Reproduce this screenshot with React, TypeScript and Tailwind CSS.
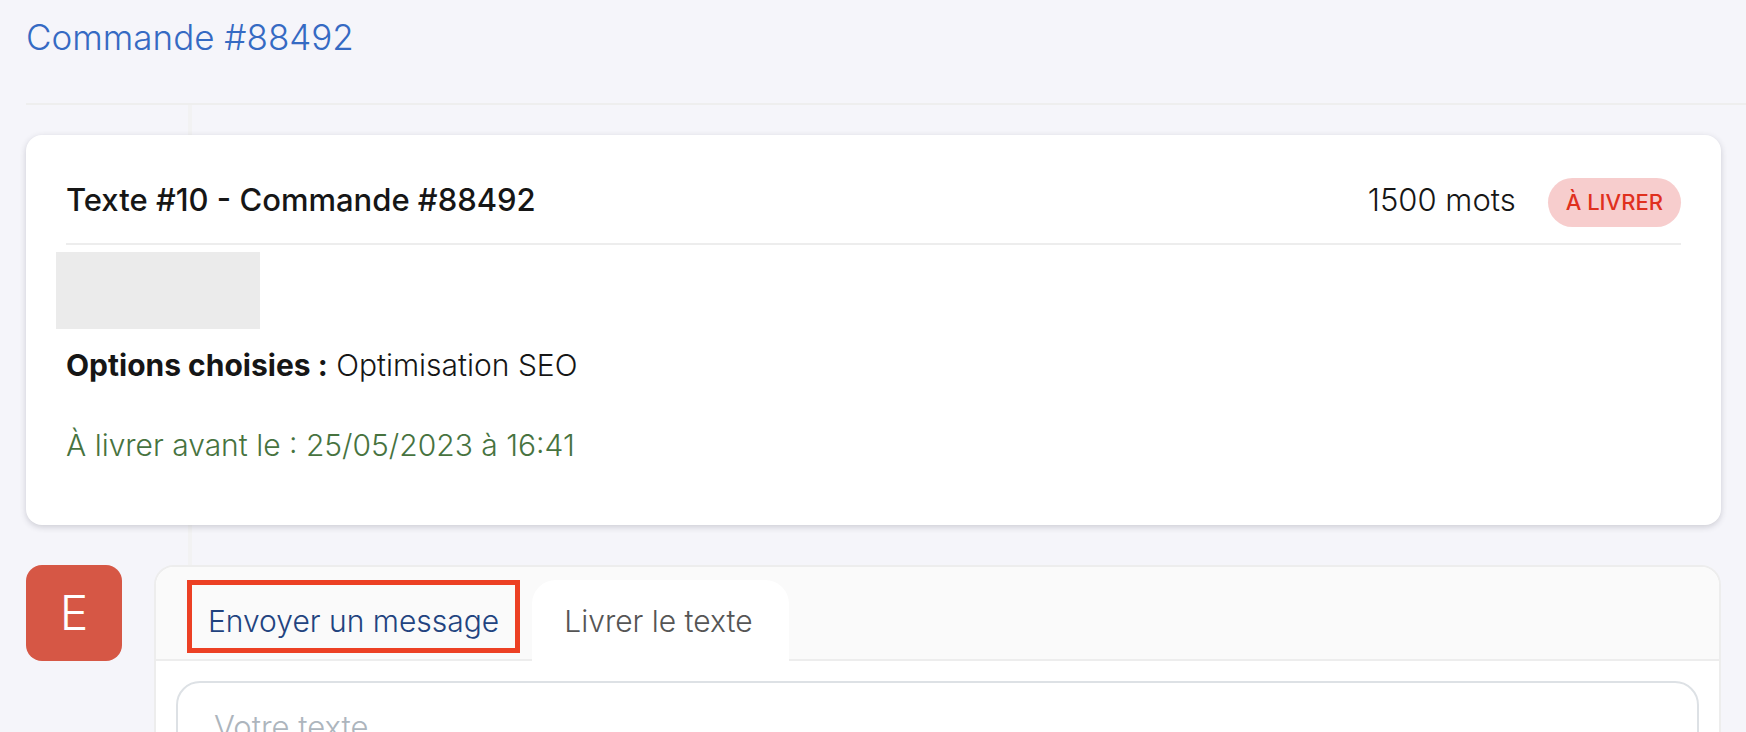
import { useState } from "react";

function OrderCard() {
  return (
    <section className="relative rounded-2xl bg-white px-10 pt-[43px] pb-14 shadow-[0_2px_6px_rgba(40,40,60,0.2)]">
      <header className="flex items-start justify-between border-b-2 border-[#ededed] pb-4">
        <h2 className="text-[31px] leading-11 font-medium">Texte #10 - Commande #88492</h2>
        <div className="flex items-start gap-8">
          <span className="text-[31px] leading-11">1500 mots</span>
          <span className="rounded-full bg-[#f7cdcd] px-[18px] text-[22px] leading-[49px] font-medium text-[#e0301e]">
            À LIVRER
          </span>
        </div>
      </header>
      <div className="-ml-[10px] mt-[7px] h-[77px] w-[204px] bg-[#ebebeb]" />
      <p className="mt-3 text-[30px] leading-12">
        <strong className="font-bold">Options choisies :</strong> Optimisation SEO
      </p>
      <p className="mt-8 text-[30px] leading-12 text-[#47733f]">À livrer avant le : 25/05/2023 à 16:41</p>
    </section>
  );
}

function ReplyPanel() {
  const [tab, setTab] = useState("deliver");
  return (
    <section className="relative flex items-start gap-8">
      <div className="flex size-24 shrink-0 items-center justify-center rounded-2xl bg-[#d65745] text-5xl text-white">
        E
      </div>
      <div className="min-w-0 flex-1 overflow-hidden rounded-t-[20px] border-2 border-[#ededed] bg-white">
        <div role="tablist" className="flex items-start gap-3 border-b-2 border-[#ededed] bg-[#fafafa] pt-[13px] pl-[31px]">
          <button
            role="tab"
            aria-selected={tab === "message"}
            onClick={() => setTab("message")}
            className="h-[73px] border-[5px] border-[#ec4024] px-4 pt-2 text-[30px] leading-12 text-[#22437f]"
          >
            Envoyer un message
          </button>
          <button
            role="tab"
            aria-selected={tab === "deliver"}
            onClick={() => setTab("deliver")}
            className="-mb-[2px] h-[81px] rounded-t-3xl bg-white pr-9 pl-8 text-[30px] leading-12 text-[#555555]"
          >
            Livrer le texte
          </button>
        </div>
        <div className="p-5">
          <textarea
            aria-label="Votre texte"
            placeholder="Votre texte"
            rows={6}
            className="block w-full resize-none rounded-3xl border-2 border-[#dde1e5] px-9 py-5 text-[31px] leading-12 placeholder:text-[#adb5bd]"
          />
        </div>
      </div>
    </section>
  );
}

export default function App() {
  return (
    <main className="h-screen overflow-hidden bg-[#f5f5fa] pl-[26px] font-['Inter',sans-serif] font-light text-[#161616]">
      <h1 className="border-b-2 border-[#eeeeee] pt-[13px] pb-[42px] text-[35px] leading-12 text-[#356ac3]">
        Commande #88492
      </h1>
      <div className="relative flex flex-col gap-10 pt-[30px] pr-[25px]">
        <div className="absolute top-0 left-[162px] h-full w-1 bg-[#f2f2f3]" />
        <OrderCard />
        <ReplyPanel />
      </div>
    </main>
  );
}
